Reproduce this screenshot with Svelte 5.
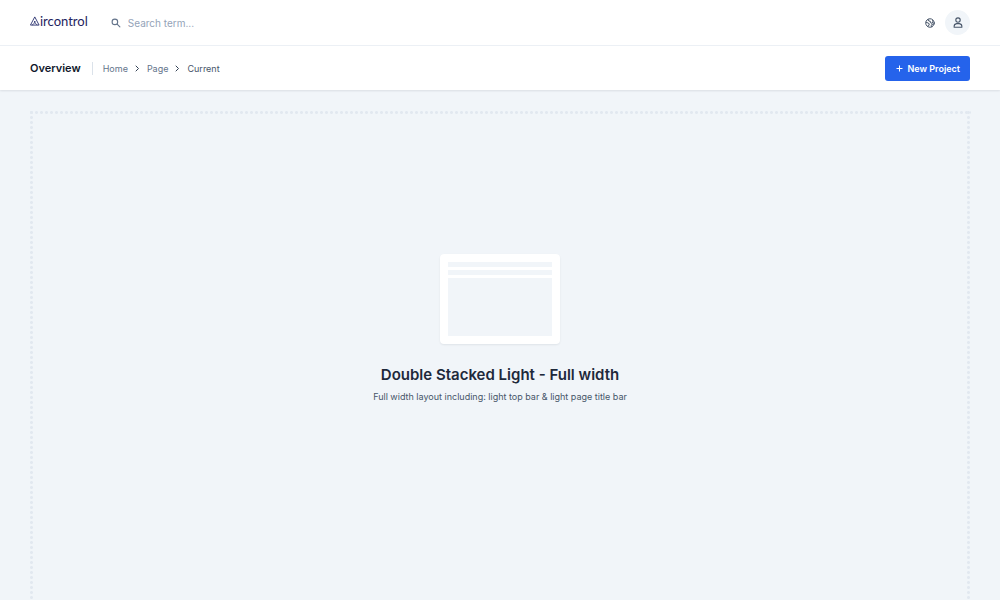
<script lang="ts">
  let search = $state('');

  const crumbs = [
    { label: 'Home', href: '#home' },
    { label: 'Page', href: '#page' },
  ];
</script>

<header class="top-bar">
  <a class="logo" href="#home" aria-label="Aircontrol">
    <svg class="logo-mark" viewBox="0 0 22 20" aria-hidden="true">
      <path d="M1 19 10.500 1 20 19" />
      <path d="M5 18.500c3-1 5-4 5.500-8.500.5 4.500 2.500 7.500 5.500 8.500" />
      <path d="M1 19h19" />
    </svg>
    <span>ircontrol</span>
  </a>

  <label class="search">
    <svg class="icon" viewBox="0 0 18 18" aria-hidden="true">
      <circle cx="7" cy="7" r="5" />
      <path d="m11 11 5 5" />
    </svg>
    <input type="text" placeholder="Search term..." aria-label="Search" bind:value={search} />
  </label>

  <div class="actions">
    <button class="icon-button" aria-label="Language">
      <svg class="icon globe" viewBox="0 0 20 20" aria-hidden="true">
        <circle cx="10" cy="10" r="8.500" />
        <path d="M2.500 8.500 6 10l2.500 1.500L8 14l-2 3M6.500 3l1 3 3 .5.500 3 3 1L16 8l-.5-3.500M18 12l-4 .5-1.500 2 1 3" />
      </svg>
    </button>
    <button class="avatar" aria-label="Account">
      <svg class="icon user" viewBox="0 0 18 20" aria-hidden="true">
        <circle cx="9" cy="5.500" r="4" />
        <path d="M6.500 12h5c2.500.5 4.500 2.500 4.500 5v1.500H2V17c0-2.500 2-4.500 4.500-5z" />
      </svg>
    </button>
  </div>
</header>

<div class="title-bar">
  <h1>Overview</h1>
  <nav class="crumbs" aria-label="Breadcrumb">
    {#each crumbs as crumb}
      <a href={crumb.href}>{crumb.label}</a>
      <svg class="chevron" viewBox="0 0 7 7" aria-hidden="true"><path d="m2 1 2.500 2.500L2 6" /></svg>
    {/each}
    <span class="current" aria-current="page">Current</span>
  </nav>
  <button class="new-project">
    <svg class="plus" viewBox="0 0 9 9" aria-hidden="true"><path d="M4.500 1.500v6M1.500 4.500h6" /></svg>
    New Project
  </button>
</div>

<main>
  <section class="canvas">
    <div class="preview" aria-hidden="true">
      <div class="bar"></div>
      <div class="bar"></div>
      <div class="body"></div>
    </div>
    <h2>Double Stacked Light - Full width</h2>
    <p>Full width layout including: light top bar &amp; light page title bar</p>
  </section>
</main>

<style>
  :global(body) {
    background: #f1f5f9;
    font-family: Inter, 'Liberation Sans', sans-serif;
    color: #1e293b;
  }

  button,
  input {
    font: inherit;
    border: 0;
    padding: 0;
    background: none;
  }
  button { cursor: pointer; }
  a { text-decoration: none; }

  .top-bar,
  .title-bar {
    display: flex;
    align-items: center;
    box-sizing: border-box;
    padding: 0 30px;
    background: #fff;
  }

  .top-bar {
    height: 46px;
    border-bottom: 1px solid #edf1f6;
  }

  .logo {
    display: flex;
    align-items: center;
    height: 20px;
    margin-bottom: 3px;
    font-family: Lato, sans-serif;
    font-size: 13px;
    line-height: 20px;
    color: #1e2360;
  }

  .logo-mark {
    width: 10px;
    height: 10px;
    fill: none;
    stroke: #2b3270;
    stroke-width: 2;
    stroke-linejoin: round;
  }

  .icon {
    width: 10px;
    height: 10px;
    flex-shrink: 0;
    fill: none;
    stroke: #475569;
    stroke-width: 2;
    stroke-linecap: round;
    stroke-linejoin: round;
  }

  .search {
    display: flex;
    flex: 1;
    align-items: center;
    gap: 7px;
    margin-left: 23px;
  }

  .search .icon { stroke: #64748b; }

  .search input {
    flex: 1;
    font-size: 10px;
    line-height: 16px;
    outline: none;
    color: #475569;
  }
  .search input::placeholder { color: #94a3b8; opacity: 1; }

  .actions {
    display: flex;
    align-items: center;
    gap: 10px;
  }

  .icon-button,
  .avatar {
    display: flex;
    align-items: center;
    justify-content: center;
  }

  .avatar {
    width: 25px;
    height: 25px;
    border-radius: 50%;
    background: #f1f5f9;
  }

  .user { height: 11px; }

  .title-bar {
    position: relative;
    height: 44px;
    box-shadow: 0 1px 2px rgba(15, 23, 42, 0.1);
  }

  h1 {
    margin: 0;
    padding-right: 11px;
    border-right: 1px solid #dbe2ea;
    font-size: 11px;
    font-weight: 600;
    line-height: 13px;
    color: #0f172a;
  }

  .crumbs {
    display: flex;
    flex: 1;
    align-items: center;
    gap: 6px;
    padding-left: 10px;
    font-size: 9px;
    line-height: 15px;
  }

  .crumbs a { color: #64748b; }
  .current { color: #475569; }

  .chevron {
    width: 7px;
    height: 7px;
    fill: none;
    stroke: #334155;
    stroke-width: 1;
    stroke-linecap: round;
    stroke-linejoin: round;
  }

  .new-project {
    display: flex;
    align-items: center;
    gap: 3px;
    height: 25px;
    padding: 0 10px;
    border-radius: 3px;
    background: #2563eb;
    color: #fff;
    font-size: 9px;
    font-weight: 600;
  }

  .plus {
    width: 9px;
    height: 9px;
    fill: none;
    stroke: #fff;
    stroke-width: 1;
  }

  main { padding: 20px 29px; }

  /* dotted frame: one 5px tile per dot, rounded to fit each side */
  .canvas {
    --dot: radial-gradient(circle at center, #e2e8f0 1px, transparent 2px);
    display: flex;
    flex-direction: column;
    align-items: center;
    box-sizing: border-box;
    min-height: 100vh;
    padding: 144px 20px;
    background-image: var(--dot), var(--dot), var(--dot), var(--dot);
    background-size: 5px 5px;
    background-position: top left, bottom left, top left, top right;
    background-repeat: round no-repeat, round no-repeat, no-repeat round, no-repeat round;
  }

  .preview {
    display: flex;
    flex-direction: column;
    gap: 3px;
    box-sizing: border-box;
    width: 120px;
    height: 90px;
    padding: 8px;
    border-radius: 4px;
    background: #fff;
    box-shadow: 0 1px 2px rgba(15, 23, 42, 0.08);
  }

  .bar {
    height: 5px;
    background: #f1f5f9;
  }

  .body {
    flex: 1;
    background: #f1f5f9;
  }

  h2 {
    margin: 21px 0 0;
    font-size: 15px;
    font-weight: 600;
    line-height: 20px;
    color: #1e293b;
  }

  p {
    margin: 5px 0 0;
    font-size: 9px;
    line-height: 14px;
    color: #475569;
  }
</style>
